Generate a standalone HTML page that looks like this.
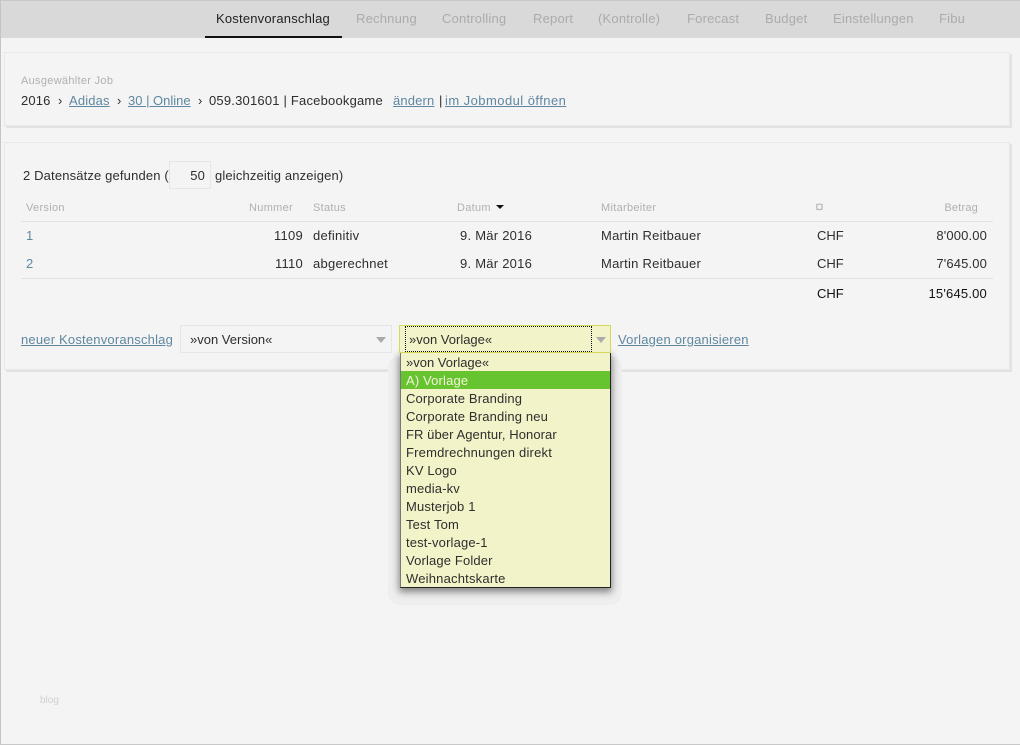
<!DOCTYPE html>
<html lang="de"><head><meta charset="utf-8"><title>Kostenvoranschlag</title>
<style>
html,body{margin:0;padding:0}
body{width:1020px;height:745px;position:relative;overflow:hidden;background:#f4f4f4;font-family:"Liberation Sans",sans-serif;font-size:13px;color:#2e2e2e;letter-spacing:.15px}
.t{position:absolute;white-space:nowrap;line-height:16px;margin-top:1px}
.k{letter-spacing:.25px}
.r{text-align:right}
a{color:#5f87a0;text-decoration:underline}
.nav{color:#ababab;top:10px;letter-spacing:.2px}
.h{color:#b0b0b0;font-size:11px;letter-spacing:.3px}
.panel{position:absolute;background:#f4f4f4;border:1px solid #e8e8e8;box-shadow:2px 2px 0 #e2e2e2;box-sizing:border-box}
.line{position:absolute;height:1px;background:#e2e2e2;left:21px;width:972px}
.box{position:absolute;box-sizing:border-box;border:1px solid #e6e6e6}
.arrow{position:absolute;width:0;height:0;border-left:5.5px solid transparent;border-right:5.5px solid transparent;border-top:6px solid #aaa}
.opt{position:absolute;left:0;width:208px;height:18px;line-height:18px;padding:1px 0 0 5px;box-sizing:border-box;white-space:nowrap;color:#2e2e2e}
</style></head><body>
<div style="position:absolute;left:0;top:0;width:1020px;height:38px;background:#d9d9d9;border-top:1px solid #c8c8c8;box-sizing:border-box"></div>
<div style="position:absolute;left:0;top:0;width:1px;height:745px;background:#c4c4c4"></div>
<div style="position:absolute;left:0;top:744px;width:1020px;height:1px;background:#c8c8c8"></div>
<div style="position:absolute;left:205px;top:36px;width:137px;height:2px;background:#111"></div>
<div class="t nav" style="left:216px;color:#222">Kostenvoranschlag</div>
<div class="t nav" style="left:356px">Rechnung</div>
<div class="t nav" style="left:442px">Controlling</div>
<div class="t nav" style="left:533px">Report</div>
<div class="t nav" style="left:598px">(Kontrolle)</div>
<div class="t nav" style="left:687px">Forecast</div>
<div class="t nav" style="left:765px">Budget</div>
<div class="t nav" style="left:833px">Einstellungen</div>
<div class="t nav" style="left:939px">Fibu</div>

<div class="panel" style="left:4px;top:52px;width:1006px;height:74px"></div>
<div class="t h" style="left:21px;top:72px">Ausgewählter Job</div>
<div class="t" style="left:21px;top:92px">2016</div>
<div class="t" style="left:58px;top:92px">›</div>
<div class="t" style="left:69px;top:92px"><a>Adidas</a></div>
<div class="t" style="left:117px;top:92px">›</div>
<div class="t" style="left:128px;top:92px;letter-spacing:0"><a>30 | Online</a></div>
<div class="t" style="left:198px;top:92px">›</div>
<div class="t" style="left:209px;top:92px;letter-spacing:.2px">059.301601 | Facebookgame</div>
<div class="t" style="left:393px;top:92px"><a>ändern</a></div>
<div class="t" style="left:439px;top:92px">|</div>
<div class="t" style="left:445px;top:92px"><a style="letter-spacing:.45px">im Jobmodul öffnen</a></div>

<div class="panel" style="left:4px;top:142px;width:1006px;height:228px"></div>
<div class="t" style="left:23px;top:167px">2 Datensätze gefunden (</div>
<div class="box" style="left:169px;top:161px;width:42px;height:28px"></div>
<div class="t r" style="left:169px;top:167px;width:36px">50</div>
<div class="t" style="left:215px;top:167px">gleichzeitig anzeigen)</div>

<div class="t h" style="left:26px;top:199px">Version</div>
<div class="t h r" style="left:193px;top:199px;width:100px">Nummer</div>
<div class="t h" style="left:313px;top:199px">Status</div>
<div class="t h" style="left:457px;top:199px">Datum</div>
<div style="position:absolute;left:496px;top:205px;width:0;height:0;border-left:4.5px solid transparent;border-right:4.5px solid transparent;border-top:4.5px solid #111"></div>
<div class="t h" style="left:601px;top:199px">Mitarbeiter</div>
<div class="t h" style="left:815px;top:199px;font-size:16px;color:#bbb">¤</div>
<div class="t h r" style="left:878px;top:199px;width:100px;letter-spacing:.2px">Betrag</div>
<div class="line" style="top:221px"></div>

<div class="t k" style="left:26px;top:227px"><a style="text-decoration:none">1</a></div>
<div class="t r k" style="left:203px;top:227px;width:100px">1109</div>
<div class="t k" style="left:313px;top:227px">definitiv</div>
<div class="t k" style="left:460px;top:227px">9. Mär 2016</div>
<div class="t k" style="left:601px;top:227px">Martin Reitbauer</div>
<div class="t" style="left:817px;top:227px;letter-spacing:0">CHF</div>
<div class="t r" style="left:867px;top:227px;width:120px">8'000.00</div>

<div class="t k" style="left:26px;top:255px"><a style="text-decoration:none">2</a></div>
<div class="t r k" style="left:203px;top:255px;width:100px">1110</div>
<div class="t k" style="left:313px;top:255px">abgerechnet</div>
<div class="t k" style="left:460px;top:255px">9. Mär 2016</div>
<div class="t k" style="left:601px;top:255px">Martin Reitbauer</div>
<div class="t" style="left:817px;top:255px;letter-spacing:0">CHF</div>
<div class="t r" style="left:867px;top:255px;width:120px">7'645.00</div>
<div class="line" style="top:278px"></div>
<div class="t" style="left:817px;top:285px;color:#111;letter-spacing:0">CHF</div>
<div class="t r" style="left:867px;top:285px;width:120px;color:#111;letter-spacing:.2px">15'645.00</div>

<div class="t" style="left:21px;top:331px"><a style="letter-spacing:.2px">neuer Kostenvoranschlag</a></div>
<div class="box" style="left:180px;top:325px;width:212px;height:28px"></div>
<div class="t" style="left:190px;top:331px;letter-spacing:0">»von Version«</div>
<div class="arrow" style="left:376px;top:337px"></div>

<div style="position:absolute;left:388px;top:356px;width:234px;height:249px;background:#eeeeee;border-radius:12px"></div>
<div style="position:absolute;left:400px;top:353px;width:211px;height:235px;box-sizing:border-box;background:#f3f3c9;border:1px solid #222;border-top:0;border-left-color:#777;box-shadow:0 3px 7px 1px rgba(0,0,0,.45)">
<div class="opt" style="top:0;letter-spacing:0">»von Vorlage«</div>
<div class="opt" style="top:18px;background:#66c430;color:#f4f4d8;width:209px">A) Vorlage</div>
<div class="opt" style="top:36px">Corporate Branding</div>
<div class="opt" style="top:54px">Corporate Branding neu</div>
<div class="opt" style="top:72px;letter-spacing:.08px">FR über Agentur, Honorar</div>
<div class="opt" style="top:90px;letter-spacing:.2px">Fremdrechnungen direkt</div>
<div class="opt" style="top:108px">KV Logo</div>
<div class="opt" style="top:126px">media-kv</div>
<div class="opt" style="top:144px">Musterjob 1</div>
<div class="opt" style="top:162px">Test Tom</div>
<div class="opt" style="top:180px">test-vorlage-1</div>
<div class="opt" style="top:198px">Vorlage Folder</div>
<div class="opt" style="top:216px;letter-spacing:.2px">Weihnachtskarte</div>
</div>
<div style="position:absolute;left:399px;top:325px;width:212px;height:28px;box-sizing:border-box;background:#f3f3c9;border:1px solid #d4d95a"></div>
<div style="position:absolute;left:405px;top:326px;width:187px;height:26px;box-sizing:border-box;border:1px dotted #111"></div>
<div class="t" style="left:409px;top:331px;letter-spacing:0">»von Vorlage«</div>
<div class="arrow" style="left:596px;top:337px"></div>
<div class="t" style="left:618px;top:331px"><a style="letter-spacing:.2px">Vorlagen organisieren</a></div>

<div class="t" style="left:40px;top:692px;font-size:10px;color:#d0d0d0;letter-spacing:0">blog</div>
</body></html>
